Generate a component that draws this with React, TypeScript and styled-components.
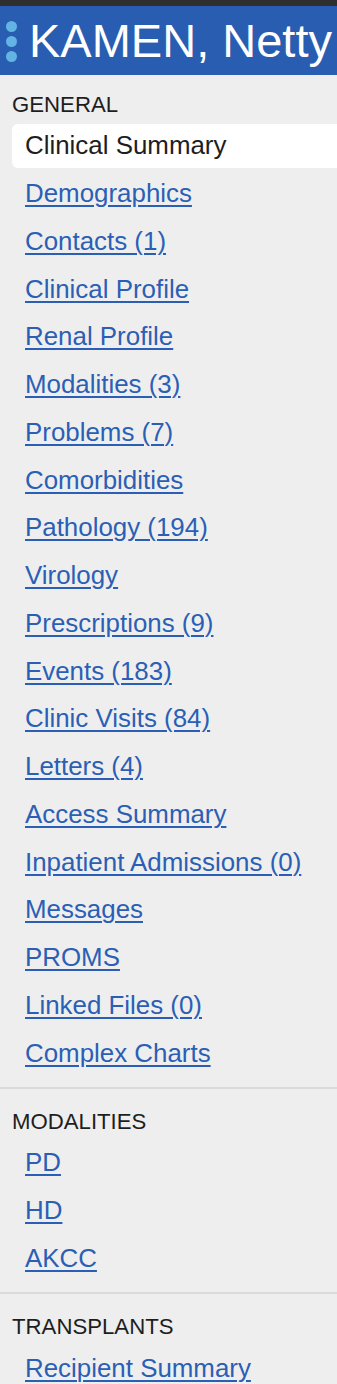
import React from 'react';
import styled, { createGlobalStyle } from 'styled-components';

const GlobalStyle = createGlobalStyle`
  html, body {
    margin: 0;
    padding: 0;
    background: #eeeeee;
  }
  body {
    font-family: "Liberation Sans", Arial, Helvetica, sans-serif;
  }
`;

const Page = styled.div`
  width: 337px;
  min-height: 1384px;
  background: #eeeeee;
  border-top: 6px solid #2f2f2f;
  overflow: hidden;
`;

// Bandeau patient
const Header = styled.header`
  height: 69px;
  background: #285db1;
  display: flex;
  align-items: center;
  gap: 12px;
  padding-left: 6px;
  white-space: nowrap;
`;

const Dots = styled.div`
  display: flex;
  flex-direction: column;
  gap: 4px;
  margin-top: 2px;
`;

const Dot = styled.span`
  width: 11px;
  height: 11px;
  border-radius: 50%;
  background: #62b4e4;
`;

const Title = styled.h1`
  margin: 0;
  color: #ffffff;
  font-size: 47px;
  font-weight: 400;
  line-height: 1;
`;

// Menu latéral
const Section = styled.section<{ $first?: boolean }>`
  padding: ${({ $first }) => ($first ? '17px' : '20px')} 0 10px;
  border-top: ${({ $first }) => ($first ? 'none' : '2px solid #dadada')};
`;

const SectionTitle = styled.h2`
  margin: 0 0 4px 12px;
  font-size: 22.2px;
  font-weight: 400;
  line-height: 26px;
  color: #1e1e1e;
`;

const Items = styled.ul`
  list-style: none;
  margin: 0;
  padding: 0;
`;

const Item = styled.li`
  height: 47.75px;
  display: flex;
  align-items: center;
  padding-left: 12px;
`;

const Link = styled.a<{ $active?: boolean }>`
  flex: 1;
  height: 44px;
  display: flex;
  align-items: center;
  padding-left: 13px;
  font-size: 25.9px;
  white-space: nowrap;
  color: ${({ $active }) => ($active ? '#1e1e1e' : '#2b5fb5')};
  text-decoration: ${({ $active }) => ($active ? 'none' : 'underline')};
  text-decoration-thickness: 2px;
  text-underline-offset: 3px;
  background: ${({ $active }) => ($active ? '#ffffff' : 'transparent')};
  border-radius: 6px 0 0 6px;
  cursor: pointer;
`;

type Group = { title: string; items: string[]; active?: string };

const groups: Group[] = [
  {
    title: 'GENERAL',
    active: 'Clinical Summary',
    items: [
      'Clinical Summary',
      'Demographics',
      'Contacts (1)',
      'Clinical Profile',
      'Renal Profile',
      'Modalities (3)',
      'Problems (7)',
      'Comorbidities',
      'Pathology (194)',
      'Virology',
      'Prescriptions (9)',
      'Events (183)',
      'Clinic Visits (84)',
      'Letters (4)',
      'Access Summary',
      'Inpatient Admissions (0)',
      'Messages',
      'PROMS',
      'Linked Files (0)',
      'Complex Charts',
    ],
  },
  { title: 'MODALITIES', items: ['PD', 'HD', 'AKCC'] },
  { title: 'TRANSPLANTS', items: ['Recipient Summary'] },
];

export default function App() {
  return (
    <>
      <GlobalStyle />
      <Page>
        <Header>
          <Dots>
            <Dot />
            <Dot />
            <Dot />
          </Dots>
          <Title>KAMEN, Netty</Title>
        </Header>
        <nav>
          {groups.map((g, i) => (
            <Section key={g.title} $first={i === 0}>
              <SectionTitle>{g.title}</SectionTitle>
              <Items>
                {g.items.map((label) => (
                  <Item key={label}>
                    <Link $active={label === g.active}>{label}</Link>
                  </Item>
                ))}
              </Items>
            </Section>
          ))}
        </nav>
      </Page>
    </>
  );
}
